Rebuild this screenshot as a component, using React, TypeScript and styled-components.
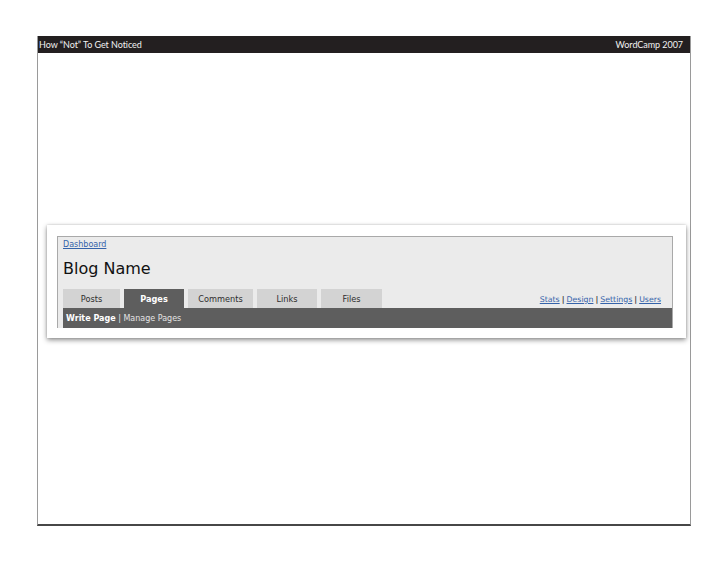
import styled, { createGlobalStyle } from "styled-components";

const GlobalStyle = createGlobalStyle`
  html, body {
    margin: 0;
    padding: 0;
    background: #ffffff;
  }
  body {
    font-family: "DejaVu Sans", "Liberation Sans", sans-serif;
  }
`;

const Page = styled.div`
  width: 728px;
  height: 563px;
  padding: 36px 0 0 37px;
  box-sizing: border-box;
`;

const Slide = styled.div`
  width: 654px;
  height: 490px;
  box-sizing: border-box;
  display: flex;
  flex-direction: column;
  border-left: 1px solid #9a9a9a;
  border-right: 1px solid #9a9a9a;
  border-bottom: 2px solid #474747;
`;

const SlideHeader = styled.header`
  height: 17px;
  display: flex;
  align-items: center;
  justify-content: space-between;
  padding: 0 7px 0 1px;
  background: #231f20;
  color: #f2f2f2;
  font-family: Lato, "Open Sans", sans-serif;
  font-size: 9px;
  letter-spacing: -0.05px;
`;

const SlideBody = styled.main`
  flex: 1;
  padding: 172px 4px 0 9px;
`;

const Card = styled.div`
  background: #ffffff;
  padding: 11px 13px 10px 10px;
  box-shadow: 0 2px 5px rgba(0, 0, 0, 0.45), 0 0 2px rgba(0, 0, 0, 0.15);
`;

const AdminBox = styled.div`
  background: #ebebeb;
  border: 1px solid #a9a9a9;
  border-bottom: none;
  padding: 3px 0 0 5px;
`;

const Link = styled.a`
  color: #3563aa;
  text-decoration: underline;
  cursor: pointer;
`;

const Crumb = styled.div`
  font-size: 8px;
  line-height: 10px;
  height: 10px;
`;

const BlogName = styled.h1`
  margin: 9px 0 10px 0;
  font-family: "DejaVu Sans", sans-serif;
  font-weight: normal;
  font-size: 16px;
  line-height: 20px;
  color: #111111;
`;

const TabRow = styled.div`
  display: flex;
  align-items: center;
  justify-content: space-between;
  padding-right: 11px;
`;

const Tabs = styled.nav`
  display: flex;
  gap: 4px;
`;

const Tab = styled.div<{ $w: number; $active?: boolean }>`
  width: ${(p) => p.$w}px;
  height: 19px;
  display: flex;
  align-items: center;
  justify-content: center;
  font-size: 8.2px;
  font-weight: ${(p) => (p.$active ? "bold" : "normal")};
  color: ${(p) => (p.$active ? "#ffffff" : "#2e2e2e")};
  background: ${(p) => (p.$active ? "#5e5e5e" : "#d3d3d3")};
`;

const RightLinks = styled.div`
  font-size: 7.8px;
  color: #333333;
  padding-top: 1px;
`;

const Sep = styled.span`
  margin: 0 2px;
  font-weight: bold;
  color: #444444;
`;

const SubMenu = styled.div`
  height: 20px;
  display: flex;
  align-items: center;
  padding-left: 3px;
  background: #5e5e5e;
  font-size: 8px;
  color: #e4e4e4;
`;

const Current = styled.span`
  font-weight: bold;
  color: #ffffff;
`;

const tabs = [
  { label: "Posts", w: 57 },
  { label: "Pages", w: 60, active: true },
  { label: "Comments", w: 65 },
  { label: "Links", w: 60 },
  { label: "Files", w: 61 },
];

const rightLinks = ["Stats", "Design", "Settings", "Users"];

export default function App() {
  return (
    <>
      <GlobalStyle />
      <Page>
        <Slide>
          <SlideHeader>
            <span>How “Not” To Get Noticed</span>
            <span>WordCamp 2007</span>
          </SlideHeader>
          <SlideBody>
            <Card>
              <AdminBox>
                <Crumb>
                  <Link>Dashboard</Link>
                </Crumb>
                <BlogName>Blog Name</BlogName>
                <TabRow>
                  <Tabs>
                    {tabs.map((t) => (
                      <Tab key={t.label} $w={t.w} $active={t.active}>
                        {t.label}
                      </Tab>
                    ))}
                  </Tabs>
                  <RightLinks>
                    {rightLinks.map((l, i) => (
                      <span key={l}>
                        {i > 0 && <Sep>|</Sep>}
                        <Link>{l}</Link>
                      </span>
                    ))}
                  </RightLinks>
                </TabRow>
                <SubMenu>
                  <Current>Write Page</Current>&nbsp;| Manage Pages
                </SubMenu>
              </AdminBox>
            </Card>
          </SlideBody>
        </Slide>
      </Page>
    </>
  );
}
